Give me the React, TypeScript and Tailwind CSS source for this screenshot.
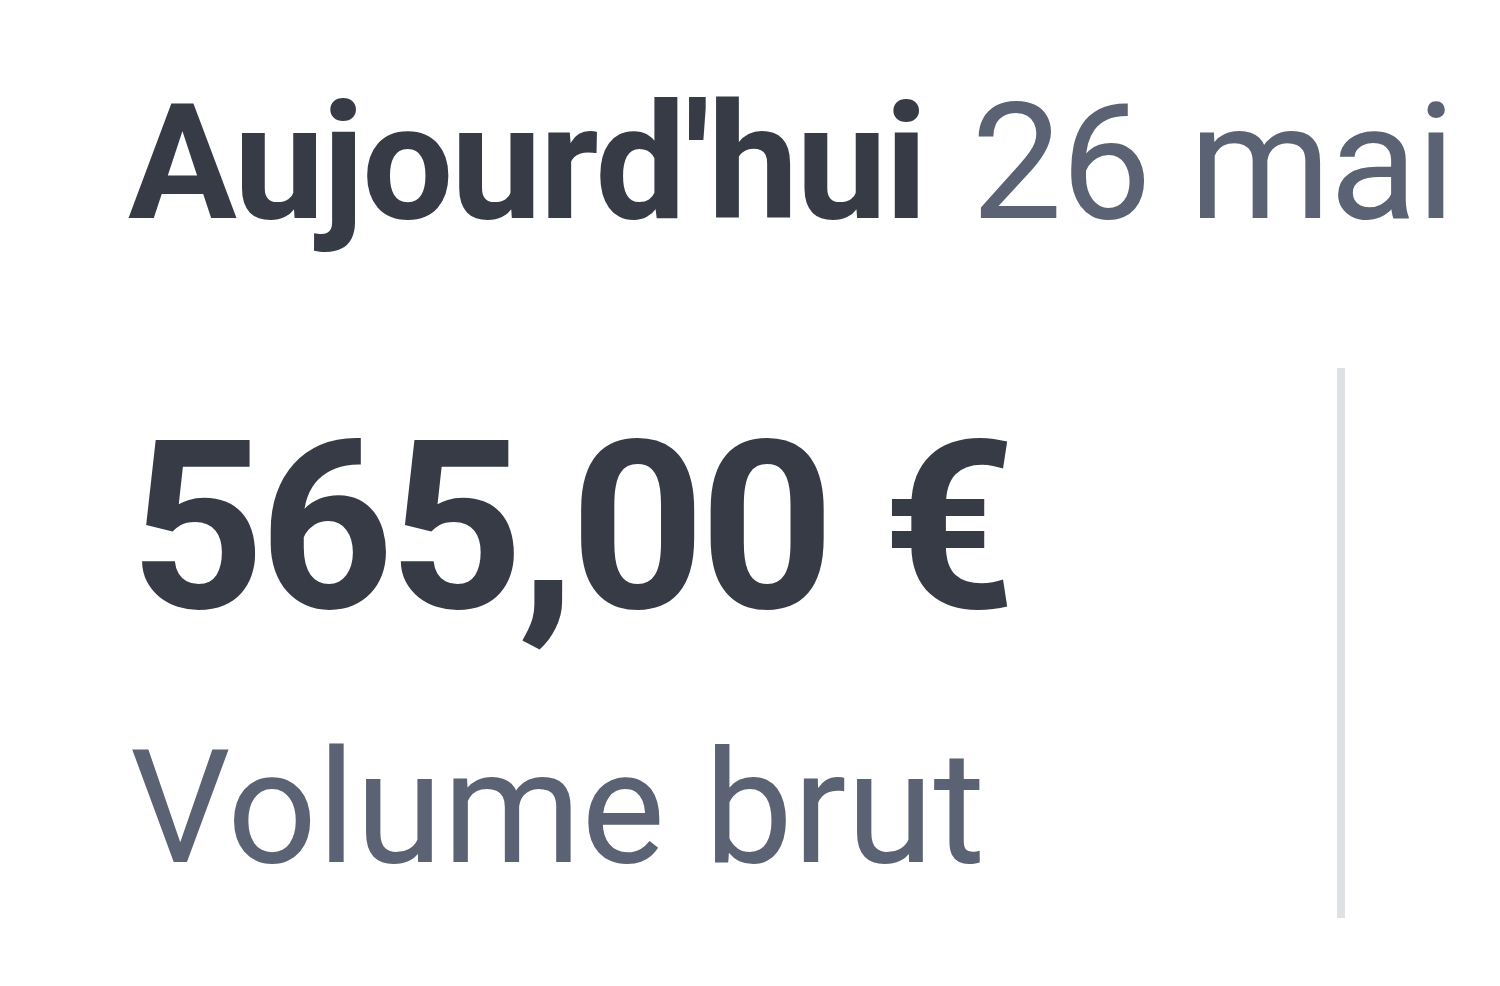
import React from 'react';

const App: React.FC = () => {
  return (
    <div className="w-[1500px] h-[986px] bg-white overflow-hidden font-['Roboto',sans-serif]">
      <h2 className="pl-[128px] pt-[68px] text-[162px] leading-[190px] whitespace-nowrap">
        <span className="font-bold text-[#363b46] tracking-[-2.3px]">Aujourd'hui</span>
        <span className="font-normal text-[#5a6273] tracking-[-1.5px] ml-[46px]">26 mai</span>
      </h2>

      <div className="flex mt-[110px] pl-[130px]">
        <div className="w-[1215px] border-r-[8px] border-[#dde0e5] h-[550px] pt-[40px]">
          <div className="text-[235px] leading-[240px] font-bold text-[#363b46] tracking-[-5.5px] whitespace-nowrap">
            565,00 €
          </div>
          <div className="mt-[70px] text-[158px] leading-[180px] text-[#5a6273] whitespace-nowrap">
            Volume brut
          </div>
        </div>
      </div>
    </div>
  );
};

export default App;
